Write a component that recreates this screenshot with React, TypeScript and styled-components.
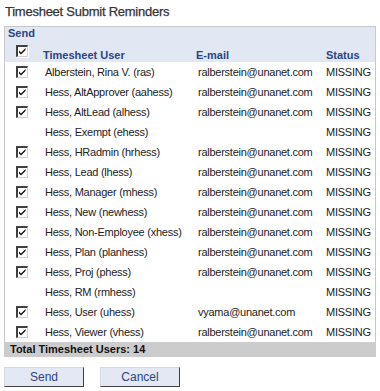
import React from 'react';
import styled, { createGlobalStyle } from 'styled-components';

const GlobalStyle = createGlobalStyle`
body {
    margin: 0;
    background: #ffffff;
    font-family: "Liberation Sans", Arial, sans-serif;
}
`;

interface UserRow {
    name: string;
    email: string;
    checked: boolean;
}

const users: UserRow[] = [
    { name: 'Alberstein, Rina V. (ras)', email: 'ralberstein@unanet.com', checked: true },
    { name: 'Hess, AltApprover (aahess)', email: 'ralberstein@unanet.com', checked: true },
    { name: 'Hess, AltLead (alhess)', email: 'ralberstein@unanet.com', checked: true },
    { name: 'Hess, Exempt (ehess)', email: '', checked: false },
    { name: 'Hess, HRadmin (hrhess)', email: 'ralberstein@unanet.com', checked: true },
    { name: 'Hess, Lead (lhess)', email: 'ralberstein@unanet.com', checked: true },
    { name: 'Hess, Manager (mhess)', email: 'ralberstein@unanet.com', checked: true },
    { name: 'Hess, New (newhess)', email: 'ralberstein@unanet.com', checked: true },
    { name: 'Hess, Non-Employee (xhess)', email: 'ralberstein@unanet.com', checked: true },
    { name: 'Hess, Plan (planhess)', email: 'ralberstein@unanet.com', checked: true },
    { name: 'Hess, Proj (phess)', email: 'ralberstein@unanet.com', checked: true },
    { name: 'Hess, RM (rmhess)', email: '', checked: false },
    { name: 'Hess, User (uhess)', email: 'vyama@unanet.com', checked: true },
    { name: 'Hess, Viewer (vhess)', email: 'ralberstein@unanet.com', checked: true },
];

const Page = styled.div`
padding: 0 4px;
width: 372px;
`;

const Title = styled.div`
font-size: 13px;
letter-spacing: -0.25px;
color: #333333;
padding: 4px 0 0 1px;
height: 16px;
line-height: 16px;
-webkit-text-stroke: 0.25px #333333;
`;

const Panel = styled.div`
margin-top: 6px;
border: 1px solid #c8c8c8;
border-bottom: none;
`;

const Table = styled.table`
width: 100%;
border-collapse: collapse;
table-layout: fixed;
font-size: 11px;
letter-spacing: -0.25px;
`;

const HeadRow = styled.tr`
background: #e1e8f4;
`;

const SendLabel = styled.th`
text-align: left;
color: #2c4585;
font-weight: bold;
padding: 0 0 0 3px;
height: 13px;
line-height: 13px;
letter-spacing: 0;
`;

const HeadCell = styled.th<{ pad: number }>`
text-align: left;
color: #2c4585;
font-weight: bold;
letter-spacing: 0;
padding: 0 0 1px ${(p) => p.pad}px;
height: 21px;
vertical-align: bottom;
`;

const Row = styled.tr`
height: 20px;
`;

const Cell = styled.td<{ pad: number }>`
padding: 0 0 0 ${(p) => p.pad}px;
color: #222222;
white-space: nowrap;
overflow: hidden;
`;

const CheckCell = styled.td`
padding: 0 0 0 11px;
vertical-align: middle;
`;

const Box = styled.span`
display: block;
width: 9px;
height: 9px;
background: #ffffff;
border-top: 2px solid #404040;
border-left: 2px solid #404040;
border-right: 1px solid #d4d0c8;
border-bottom: 1px solid #d4d0c8;
box-shadow: 1px 1px 0 #ffffff;
position: relative;
`;

const Total = styled.div`
background: #cccccc;
font-size: 11px;
font-weight: bold;
color: #111111;
height: 15px;
line-height: 15px;
padding-left: 6px;
`;

const Buttons = styled.div`
display: flex;
gap: 16px;
margin-top: 10px;
`;

const Button = styled.button`
width: 80px;
height: 20px;
background: #e3e8f4;
border-top: 1px solid #d8d8d8;
border-left: 1px solid #d8d8d8;
border-right: 1px solid #404040;
border-bottom: 1px solid #404040;
color: #2c4585;
font-family: "Liberation Sans", Arial, sans-serif;
font-size: 12px;
padding: 0;
`;

function CheckBox() {
    return (
        <Box>
            <svg width="9" height="9" viewBox="0 0 9 9" style={{ position: 'absolute', left: 0, top: 0 }}>
                <path d="M1 3.5 L3 5.5 L7.5 1 L7.5 3 L3 7.5 L1 5.5 Z" fill="#111" />
            </svg>
        </Box>
    );
}

export default function App() {
    return (
        <>
            <GlobalStyle />
            <Page>
                <Title>Timesheet Submit Reminders</Title>
                <Panel>
                    <Table>
                        <colgroup>
                            <col style={{ width: 38 }} />
                            <col style={{ width: 153 }} />
                            <col style={{ width: 127 }} />
                            <col />
                        </colgroup>
                        <thead>
                            <HeadRow>
                                <SendLabel colSpan={4}>Send</SendLabel>
                            </HeadRow>
                            <HeadRow>
                                <CheckCell as="th"><CheckBox /></CheckCell>
                                <HeadCell pad={0}>Timesheet User</HeadCell>
                                <HeadCell pad={0}>E-mail</HeadCell>
                                <HeadCell pad={3}>Status</HeadCell>
                            </HeadRow>
                        </thead>
                        <tbody>
                            {users.map((u) => (
                                <Row key={u.name}>
                                    <CheckCell>{u.checked && <CheckBox />}</CheckCell>
                                    <Cell pad={2}>{u.name}</Cell>
                                    <Cell pad={2}>{u.email}</Cell>
                                    <Cell pad={3}>MISSING</Cell>
                                </Row>
                            ))}
                        </tbody>
                    </Table>
                </Panel>
                <Total>Total Timesheet Users: 14</Total>
                <Buttons>
                    <Button>Send</Button>
                    <Button>Cancel</Button>
                </Buttons>
            </Page>
        </>
    );
}
